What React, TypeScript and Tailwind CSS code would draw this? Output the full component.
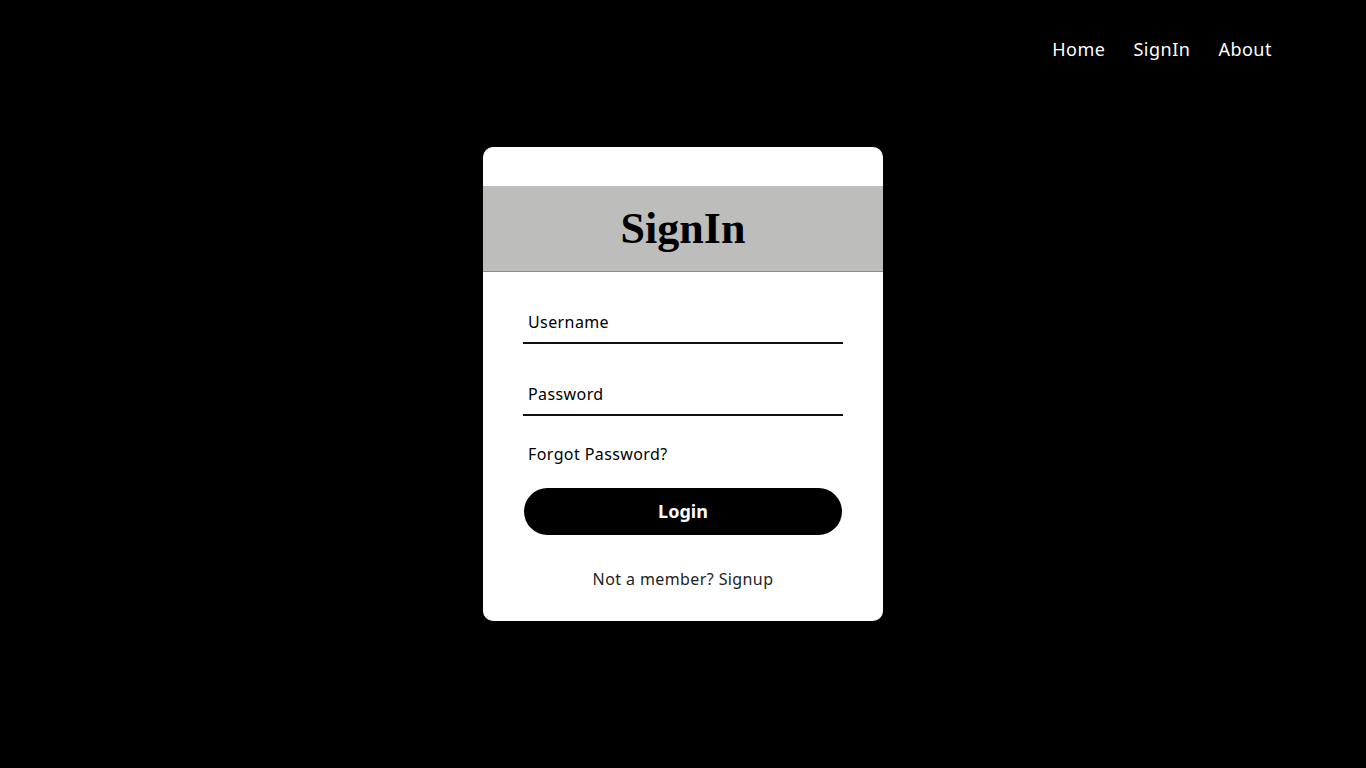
import React from "react";

export default function App() {
  const sans = { fontFamily: '"Noto Sans", "Open Sans", sans-serif' };
  return (
    <div
      className="w-full h-screen bg-black flex flex-col"
      style={sans}
    >
      <nav className="h-[98px] flex items-center justify-end pr-[94px] gap-[28px] text-white text-[18px] tracking-[0.5px]">
        <a className="cursor-pointer">Home</a>
        <a className="cursor-pointer">SignIn</a>
        <a className="cursor-pointer">About</a>
      </nav>
      <main className="flex-1 flex items-center justify-center">
        <div className="w-[400px] h-[474px] bg-white rounded-[10px] pt-[39px] flex flex-col">
          <div className="h-[86px] bg-[#bdbdbb] border-b border-[#8a8a8a] flex items-center justify-center">
            <h1
              className="text-[44px] text-black leading-none font-bold"
              style={{ fontFamily: '"Liberation Serif", "DejaVu Serif", serif' }}
            >
              SignIn
            </h1>
          </div>
          <div className="px-[40px] flex flex-col">
            <input
              className="mt-[30px] h-[42px] w-full border-b-2 border-[#111] outline-none px-[5px] text-[16px] tracking-[0.4px] text-black placeholder:text-black"
              placeholder="Username"
            />
            <input
              type="password"
              className="mt-[30px] h-[42px] w-full border-b-2 border-[#111] outline-none px-[5px] text-[16px] tracking-[0.4px] text-black placeholder:text-black"
              placeholder="Password"
            />
            <div className="mt-[26px] h-[24px] leading-[24px] pl-[5px] text-[16px] tracking-[0.4px] text-black">
              Forgot Password?
            </div>
            <button className="mt-[22px] mx-[1px] h-[47px] rounded-full bg-black text-white font-bold text-[18px]">
              Login
            </button>
            <div className="mt-[32px] h-[24px] leading-[24px] text-center text-[16px] tracking-[0.4px] text-[#222]">
              Not a member? Signup
            </div>
          </div>
        </div>
      </main>
      <div className="h-[98px]" />
    </div>
  );
}
